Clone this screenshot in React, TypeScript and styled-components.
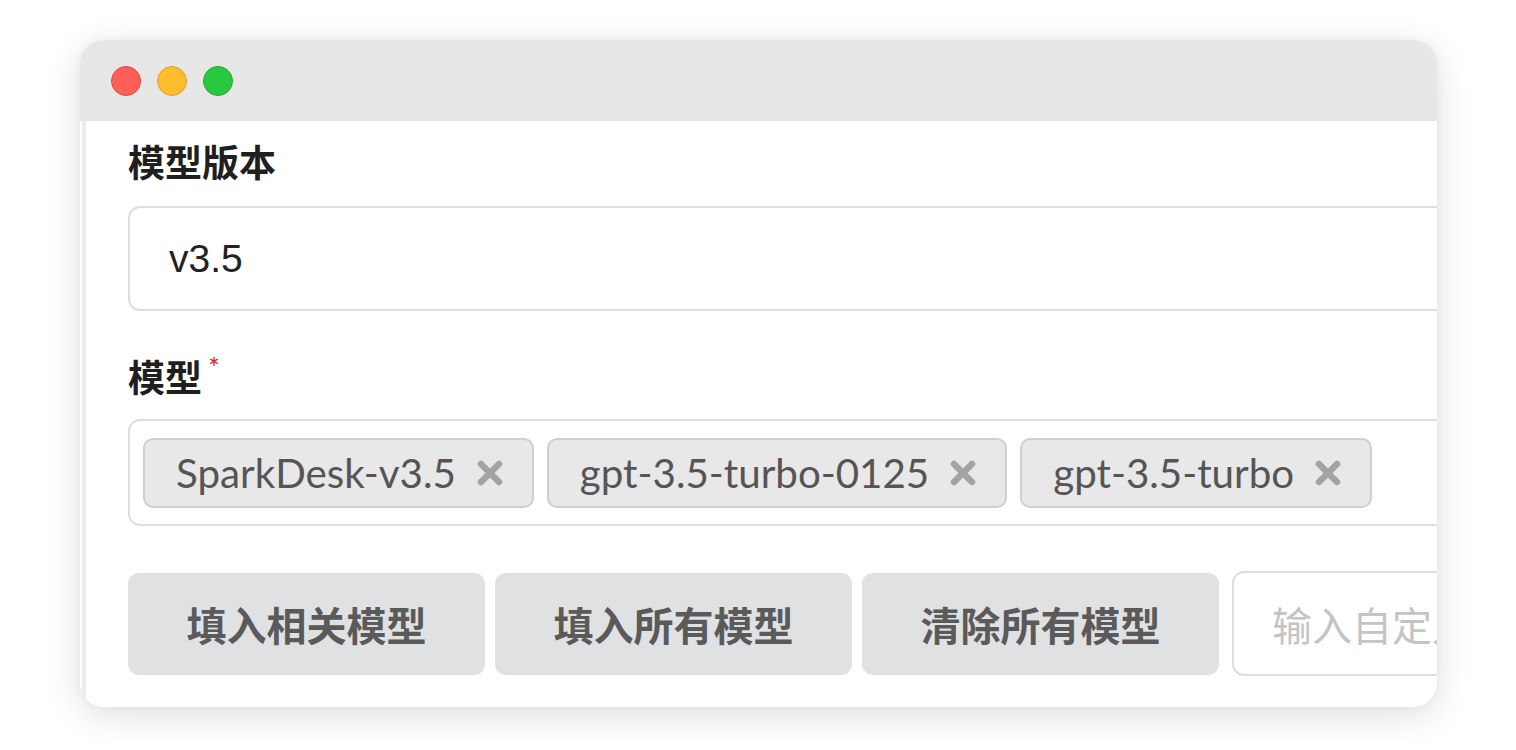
import React from "react";
import styled, { createGlobalStyle } from "styled-components";

const Global = createGlobalStyle`
  html, body { margin: 0; padding: 0; background: #ffffff; }
  body { font-family: Lato, "Noto Sans CJK SC", sans-serif; }
`;

const Page = styled.div`
  width: 1516px;
  height: 750px;
  padding: 40px 0 0 80px;
  box-sizing: border-box;
  background: #ffffff;
  overflow: hidden;
`;

const Window = styled.div`
  width: 1357px;
  height: 667px;
  border-radius: 24px;
  overflow: hidden;
  display: flex;
  flex-direction: column;
  background: #ffffff;
  box-shadow: 0 8px 36px rgba(0, 0, 0, 0.13), 0 0 10px rgba(0, 0, 0, 0.04);
`;

const TitleBar = styled.div`
  height: 81px;
  flex-shrink: 0;
  background: #e7e7e7;
  display: flex;
  align-items: center;
  gap: 16px;
  padding-left: 31px;
`;

const Light = styled.span<{ $bg: string; $border: string }>`
  width: 30px;
  height: 30px;
  border-radius: 50%;
  box-sizing: border-box;
  background: ${(p) => p.$bg};
  border: 1px solid ${(p) => p.$border};
`;

const Body = styled.div`
  flex: 1;
  padding-left: 2px;
  display: flex;
  min-height: 0;
`;

const Content = styled.div`
  flex: 1;
  border-left: 4px solid #ececec;
  padding: 20px 0 0 42px;
  display: flex;
  flex-direction: column;
  overflow: hidden;
`;

const Label = styled.div<{ $gapTop?: number; $gapBottom?: number }>`
  font-family: Lato, "Noto Sans CJK SC", sans-serif;
  font-weight: 700;
  font-size: 37px;
  line-height: 44px;
  color: #1f1f1f;
  margin-top: ${(p) => p.$gapTop ?? 0}px;
  margin-bottom: ${(p) => p.$gapBottom ?? 21}px;
  display: flex;
  align-items: flex-start;
`;

const Required = styled.span`
  color: #db2828;
  font-size: 28px;
  line-height: 28px;
  margin-left: 6px;
  margin-top: -2px;
  font-weight: 400;
`;

const TextInput = styled.div`
  width: 1400px;
  height: 105px;
  box-sizing: border-box;
  border: 2px solid #dedede;
  border-radius: 12px;
  display: flex;
  align-items: center;
  padding-left: 39px;
  font-family: "Liberation Sans", Arial, sans-serif;
  font-size: 39px;
  color: #222;
  flex-shrink: 0;
`;

const MultiBox = styled.div`
  width: 1400px;
  height: 107px;
  box-sizing: border-box;
  border: 2px solid #dedede;
  border-radius: 12px;
  display: flex;
  align-items: center;
  gap: 13px;
  padding-left: 13px;
  flex-shrink: 0;
`;

const Tag = styled.div`
  height: 70px;
  box-sizing: border-box;
  background: #e8e8e8;
  border: 2px solid #cfcfcf;
  border-radius: 10px;
  display: flex;
  align-items: center;
  gap: 20px;
  padding: 0 28px 0 31px;
  font-family: Lato, sans-serif;
  font-size: 40.3px;
  color: #555555;
  white-space: nowrap;
`;

const Row = styled.div`
  margin-top: 45px;
  display: flex;
  align-items: center;
  gap: 10px;
  flex-shrink: 0;
`;

const Button = styled.div`
  width: 357px;
  height: 102px;
  flex-shrink: 0;
  border-radius: 11px;
  background: #e0e1e2;
  display: flex;
  align-items: center;
  justify-content: center;
  font-family: Lato, "Noto Sans CJK SC", sans-serif;
  font-weight: 700;
  font-size: 40px;
  color: #5a5a5a;
`;

const CustomInput = styled.div`
  margin-left: 3px;
  width: 400px;
  height: 105px;
  flex-shrink: 0;
  box-sizing: border-box;
  border: 2px solid #dedede;
  border-radius: 12px;
  display: flex;
  align-items: center;
  padding-left: 38px;
  font-family: Lato, "Noto Sans CJK SC", sans-serif;
  font-size: 40px;
  color: #c4c4c4;
  white-space: nowrap;
  overflow: hidden;
`;

const Close = () => (
  <svg width="28" height="28" viewBox="0 0 28 28">
    <path d="M5 5 L23 23 M23 5 L5 23" stroke="#a3a3a3" strokeWidth="6.5" strokeLinecap="round" />
  </svg>
);

const tags = ["SparkDesk-v3.5", "gpt-3.5-turbo-0125", "gpt-3.5-turbo"];
const buttons = ["填入相关模型", "填入所有模型", "清除所有模型"];

export default function App() {
  return (
    <>
      <Global />
      <Page>
        <Window>
          <TitleBar>
            <Light $bg="#ff5f57" $border="#e2463f" />
            <Light $bg="#febc2e" $border="#e0a028" />
            <Light $bg="#28c840" $border="#1eab32" />
          </TitleBar>
          <Body>
            <Content>
              <Label>模型版本</Label>
              <TextInput>v3.5</TextInput>
              <Label $gapTop={45} $gapBottom={19}>
                模型<Required>*</Required>
              </Label>
              <MultiBox>
                {tags.map((t) => (
                  <Tag key={t}>
                    {t}
                    <Close />
                  </Tag>
                ))}
              </MultiBox>
              <Row>
                {buttons.map((b) => (
                  <Button key={b}>{b}</Button>
                ))}
                <CustomInput>输入自定义模型名称</CustomInput>
              </Row>
            </Content>
          </Body>
        </Window>
      </Page>
    </>
  );
}
